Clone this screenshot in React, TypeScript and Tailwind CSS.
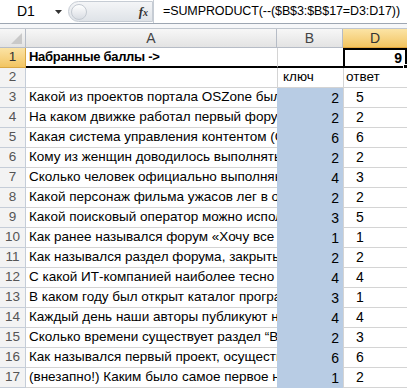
import React from "react";

const rows: { q: string; key: string; ans: string }[] = [
  { q: "Какой из проектов портала OSZone был открыт первым?", key: "2", ans: "5" },
  { q: "На каком движке работал первый форум?", key: "2", ans: "2" },
  { q: "Какая система управления контентом (CMS) используется?", key: "6", ans: "6" },
  { q: "Кому из женщин доводилось выполнять обязанности?", key: "2", ans: "2" },
  { q: "Сколько человек официально выполняют обязанности?", key: "4", ans: "3" },
  { q: "Какой персонаж фильма ужасов лег в основу аватара?", key: "2", ans: "2" },
  { q: "Какой поисковый оператор можно использовать?", key: "3", ans: "5" },
  { q: "Как ранее назывался форум «Хочу все знать»?", key: "1", ans: "1" },
  { q: "Как назывался раздел форума, закрытый для гостей?", key: "2", ans: "2" },
  { q: "С какой ИТ-компанией наиболее тесно сотрудничает портал?", key: "4", ans: "4" },
  { q: "В каком году был открыт каталог программ?", key: "3", ans: "1" },
  { q: "Каждый день наши авторы публикуют новости?", key: "4", ans: "4" },
  { q: "Сколько времени существует раздел “Вопросы”?", key: "2", ans: "3" },
  { q: "Как назывался первый проект, осуществленный порталом?", key: "6", ans: "6" },
  { q: "(внезапно!) Каким было самое первое название?", key: "1", ans: "2" },
];

const rowHead = "w-[26px] shrink-0 flex items-center justify-center border-r border-b border-[#c5cdd8] bg-[#f3f3f3] text-[#555] text-[13.5px]";

export default function App() {
  return (
    <div className="w-[407px] h-[389px] overflow-hidden bg-white text-black font-['Liberation_Sans',Arial,sans-serif]">
      {/* formula bar */}
      <div className="flex h-[24px] bg-white border-b border-[#9da6b2]">
        <div className="w-[68px] flex items-center justify-between pl-[17px] pr-[6px] text-[14px]">
          <span>D1</span>
          <svg width="7" height="4" viewBox="0 0 7 4"><path d="M0 0h7L3.5 4z" fill="#333" /></svg>
        </div>
        <div className="w-[85px] flex items-center my-[1px] rounded-l-full bg-gradient-to-b from-[#f4f5f7] to-[#dfe3e8] border border-[#c6ccd4]">
          <div className="ml-[2px] w-[16px] h-[16px] rounded-full bg-gradient-to-b from-white to-[#d9dde3] border border-[#c3c9d1]" />
          <span className="ml-auto mr-[4px] italic font-bold text-[13px] font-['Liberation_Serif',serif] text-[#333]">
            f<span className="text-[10px]">x</span>
          </span>
        </div>
        <div className="flex-1 flex items-center pl-[9px] text-[12.5px] tracking-[-0.1px] border-l border-[#c6ccd4] whitespace-nowrap overflow-hidden">
          =SUMPRODUCT(--($B$3:$B$17=D3:D17))
        </div>
      </div>
      <div className="h-[5px] bg-[#f6f7f9] border-b border-[#c0c6ce]" />

      {/* column headers */}
      <div className="flex h-[19px] text-[14px] text-[#444]">
        <div className="w-[26px] shrink-0 flex items-end justify-end pr-[3px] pb-[3px] bg-gradient-to-b from-[#f7f7f7] to-[#e3e3e3] border-r border-b border-[#b6bcc6]">
          <svg width="11" height="11" viewBox="0 0 11 11"><path d="M11 0v11H0z" fill="#c9c9c9" /></svg>
        </div>
        <div className="w-[251px] flex items-center justify-center bg-gradient-to-b from-[#f7f7f7] to-[#e3e3e3] border-r border-b border-[#b6bcc6]">A</div>
        <div className="w-[66px] flex items-center justify-center bg-gradient-to-b from-[#f7f7f7] to-[#e3e3e3] border-r border-b border-[#b6bcc6]">B</div>
        <div className="w-[64px] flex items-center justify-center bg-gradient-to-b from-[#fbe4a5] to-[#f2c45f] border-b border-[#e3a53c] text-[#333]">D</div>
      </div>

      {/* row 1 */}
      <div className="flex h-[20px]">
        <div className="w-[26px] shrink-0 flex items-center justify-center border-r border-b border-[#d9a845] bg-gradient-to-b from-[#fbe3a4] to-[#f2c561] text-[#333] text-[13.5px]">1</div>
        <div className="w-[251px] flex items-center pl-[3px] text-[13px] tracking-[-0.3px] font-bold border-b-2 border-black whitespace-nowrap">Набранные баллы -&gt;</div>
        <div className="w-[66px] border-l border-[#d4d4d4] border-b-2 border-b-black" />
        <div className="relative w-[64px] flex items-center justify-end pr-[3px] text-[14px] font-bold border-2 border-black">
          9
          <div className="absolute -right-[3px] -bottom-[3px] w-[5px] h-[5px] bg-black border border-white" />
        </div>
      </div>

      {/* row 2 */}
      <div className="flex h-[20px]">
        <div className={rowHead}>2</div>
        <div className="w-[251px] border-b border-[#d4d4d4]" />
        <div className="w-[66px] flex items-center pl-[5px] text-[13.5px] border-l border-b border-[#d4d4d4]">ключ</div>
        <div className="w-[64px] flex items-center pl-[2px] text-[13.5px] border-l border-b border-[#d4d4d4]">ответ</div>
      </div>

      {rows.map((r, i) => (
        <div key={i} className="flex h-[20px]">
          <div className={rowHead}>{i + 3}</div>
          <div className="w-[251px] flex items-center pl-[3px] text-[13.5px] whitespace-nowrap overflow-hidden border-b border-[#d4d4d4]">
            {r.q}
          </div>
          <div className="w-[66px] flex items-center justify-end pr-[4px] text-[14px] bg-[#b8cce4]">{r.key}</div>
          <div className="w-[64px] flex items-center pl-[12px] text-[14px] border-l border-b border-[#d4d4d4]">{r.ans}</div>
        </div>
      ))}
    </div>
  );
}
